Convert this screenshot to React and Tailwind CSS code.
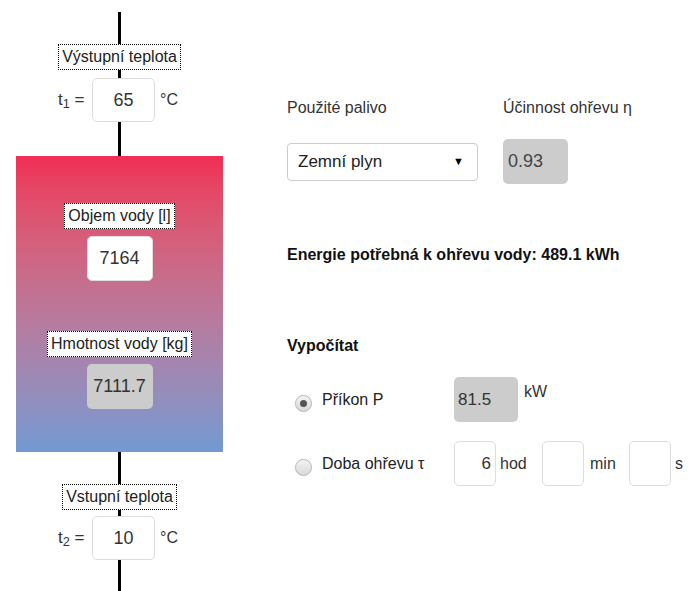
export default function App() {
  const Line = ({ h }) => <div className={`w-[3px] shrink-0 bg-black ${h}`} />;

  const Tag = ({ children }) => (
    <div className="shrink-0 border border-dotted border-black bg-white px-[3px] py-[2px] text-[16px] leading-[20px] text-[#222]">
      {children}
    </div>
  );

  const TempRow = ({ sub, value }) => (
    <div className="flex w-full shrink-0 items-center pl-[42px]">
      <span className="w-[34px] text-[17px] text-[#333]">
        t<sub>{sub}</sub> =
      </span>
      <div className="flex h-[44px] w-[63px] items-center justify-center rounded-[5px] border border-[#ddd] bg-white text-[18px] text-[#333]">
        {value}
      </div>
      <span className="ml-[5px] text-[16px] text-[#333]">°C</span>
    </div>
  );

  const Radio = ({ checked }) => (
    <span className="mt-[8px] ml-[8px] flex h-[17px] w-[17px] items-center justify-center rounded-full border border-[#b5b5b5] bg-linear-to-b from-[#f4f4f4] to-[#d9d9d9]">
      {checked && <span className="h-[7px] w-[7px] rounded-full bg-[#555]" />}
    </span>
  );

  const SmallBox = ({ value }) => (
    <div className="flex h-[45px] w-[42px] items-center justify-end rounded-[5px] border border-[#ddd] bg-white pr-[4px] text-[17px] text-[#333]">
      {value}
    </div>
  );

  return (
    <div
      className="flex h-[591px] w-[688px] items-start overflow-hidden bg-white"
      style={{ fontFamily: '"Liberation Sans", Arial, sans-serif' }}
    >
      {/* schema */}
      <div className="ml-[16px] flex w-[207px] shrink-0 flex-col items-center pt-[12px]">
        <Line h="h-[32px]" />
        <Tag>Výstupní teplota</Tag>
        <Line h="h-[8px]" />
        <TempRow sub="1" value="65" />
        <Line h="h-[34px]" />
        <div className="flex h-[296px] w-full shrink-0 flex-col items-center bg-linear-to-b from-[#ef2d55] to-[#7299d3] pt-[47px]">
          <Tag>Objem vody [l]</Tag>
          <div className="mt-[7px] flex h-[45px] w-[66px] items-center justify-center rounded-[5px] border border-[#ddd] bg-white text-[18px] text-[#333]">
            7164
          </div>
          <div className="mt-[50px]">
            <Tag>Hmotnost vody [kg]</Tag>
          </div>
          <div className="mt-[7px] flex h-[45px] w-[66px] items-center justify-center rounded-[5px] bg-[#cccccc] text-[18px] text-[#333]">
            7111.7
          </div>
        </div>
        <Line h="h-[32px]" />
        <Tag>Vstupní teplota</Tag>
        <Line h="h-[6px]" />
        <TempRow sub="2" value="10" />
        <Line h="h-[40px]" />
      </div>

      {/* calculator */}
      <div className="ml-[64px] flex flex-col pt-[99px] text-[#333]">
        <div className="flex text-[16px] leading-[18px]">
          <span className="w-[216px]">Použité palivo</span>
          <span>Účinnost ohřevu η</span>
        </div>
        <div className="mt-[22px] flex items-center">
          <div className="flex h-[38px] w-[191px] items-center justify-between rounded-[4px] border border-[#ccc] bg-white pr-[13px] pl-[10px] text-[17px] text-[#222]">
            <span>Zemní plyn</span>
            <span className="text-[11px] text-black">▼</span>
          </div>
          <div className="ml-[25px] flex h-[45px] w-[65px] items-center rounded-[5px] bg-[#cccccc] pl-[5px] text-[18px] text-[#444]">
            0.93
          </div>
        </div>

        <div className="mt-[62px] text-[16px] leading-[18px] font-bold text-[#111]">
          Energie potřebná k ohřevu vody: 489.1 kWh
        </div>

        <div className="mt-[73px] text-[16px] leading-[18px] font-bold text-[#111]">
          Vypočítat
        </div>

        <div className="mt-[22px] flex items-center">
          <div className="w-[35px]">
            <Radio checked />
          </div>
          <span className="w-[132px] text-[16px] text-[#222]">Příkon P</span>
          <div className="flex h-[45px] w-[64px] items-center rounded-[5px] bg-[#cccccc] pl-[4px] text-[17px] text-[#333]">
            81.5
          </div>
          <span className="ml-[6px] self-start pt-[6px] text-[16px] leading-[18px]">kW</span>
        </div>

        <div className="mt-[19px] flex items-center">
          <div className="w-[35px]">
            <Radio />
          </div>
          <span className="w-[132px] text-[16px] text-[#222]">Doba ohřevu τ</span>
          <SmallBox value="6" />
          <span className="ml-[4px] w-[42px] text-[16px]">hod</span>
          <SmallBox value="" />
          <span className="ml-[6px] w-[39px] text-[16px]">min</span>
          <SmallBox value="" />
          <span className="ml-[4px] text-[16px]">s</span>
        </div>
      </div>
    </div>
  );
}
